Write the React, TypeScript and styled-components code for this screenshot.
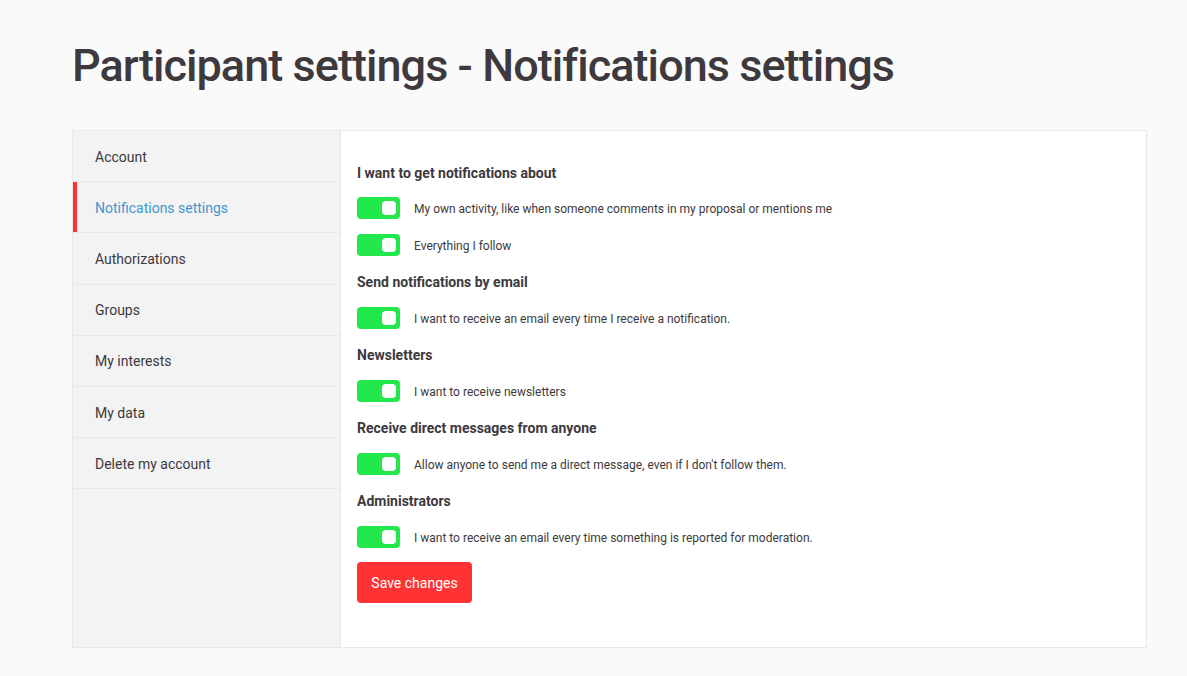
import React, { useState } from "react";
import styled, { createGlobalStyle } from "styled-components";

const GlobalStyle = createGlobalStyle`
  html, body {
    margin: 0;
    padding: 0;
    background: #fafafa;
  }
  body {
    font-family: Roboto, "Noto Sans", "Liberation Sans", sans-serif;
    color: #3d393c;
  }
  * { box-sizing: border-box; }
`;

const Page = styled.div`
  padding: 38px 40px 28px 72px;
  width: 1187px;
`;

const Title = styled.h1`
  margin: 0 0 36px;
  font-size: 45px;
  line-height: 56px;
  font-weight: 500;
  letter-spacing: -0.95px;
  color: #3d393c;
`;

const Card = styled.div`
  display: grid;
  grid-template-columns: 268px 1fr;
  width: 1075px;
  min-height: 518px;
  border: 1px solid #e8e8e8;
  background: #fff;
`;

const Sidebar = styled.nav`
  background: #f3f3f3;
  border-right: 1px solid #e8e8e8;
  display: flex;
  flex-direction: column;
`;

const NavItem = styled.a<{ $active?: boolean }>`
  position: relative;
  display: flex;
  align-items: center;
  height: 51.2px;
  padding: 1px 0 0 22px;
  border-bottom: 1px solid #e8e8e8;
  font-size: 14px;
  color: ${(p) => (p.$active ? "#3e97cf" : "#3d393c")};
  text-decoration: none;
  cursor: pointer;
  &::before {
    content: "";
    position: absolute;
    left: 0;
    top: 0;
    bottom: 0;
    width: 4px;
    background: ${(p) => (p.$active ? "#ff3333" : "transparent")};
  }
`;

const Content = styled.form`
  padding: 32px 16px 44px 16px;
  display: flex;
  flex-direction: column;
  align-items: flex-start;
`;

const SectionTitle = styled.h3<{ $first?: boolean }>`
  margin: ${(p) => (p.$first ? "0 0 14px" : "1px 0 15px")};
  font-size: 14px;
  line-height: 20px;
  font-weight: 700;
  color: #3d393c;
`;

const Row = styled.label`
  display: flex;
  align-items: center;
  gap: 14px;
  height: 22px;
  margin-bottom: 15px;
  padding-top: 1px;
  font-size: 12px;
  color: #3d393c;
  cursor: pointer;
`;

const Switch = styled.span<{ $on: boolean }>`
  position: relative;
  flex: none;
  align-self: flex-start;
  margin-top: -1px;
  width: 43px;
  height: 22px;
  border-radius: 4px;
  background: ${(p) => (p.$on ? "#22e84b" : "#cacaca")};
`;

const Knob = styled.span<{ $on: boolean }>`
  position: absolute;
  top: 4px;
  left: ${(p) => (p.$on ? "25px" : "4px")};
  width: 14px;
  height: 14px;
  border-radius: 4px;
  background: #fff;
`;

const Button = styled.button`
  margin-top: -1px;
  width: 115px;
  height: 41px;
  border: none;
  border-radius: 4px;
  background: #ff3333;
  color: #fff;
  font-family: inherit;
  font-size: 14px;
  cursor: pointer;
`;

const nav = [
  "Account",
  "Notifications settings",
  "Authorizations",
  "Groups",
  "My interests",
  "My data",
  "Delete my account",
];

const sections: { title: string; items: string[] }[] = [
  {
    title: "I want to get notifications about",
    items: [
      "My own activity, like when someone comments in my proposal or mentions me",
      "Everything I follow",
    ],
  },
  {
    title: "Send notifications by email",
    items: ["I want to receive an email every time I receive a notification."],
  },
  { title: "Newsletters", items: ["I want to receive newsletters"] },
  {
    title: "Receive direct messages from anyone",
    items: ["Allow anyone to send me a direct message, even if I don't follow them."],
  },
  {
    title: "Administrators",
    items: ["I want to receive an email every time something is reported for moderation."],
  },
];

function Toggle({ label }: { label: string }) {
  const [on, setOn] = useState(true);
  return (
    <Row onClick={() => setOn(!on)}>
      <Switch $on={on}>
        <Knob $on={on} />
      </Switch>
      <span>{label}</span>
    </Row>
  );
}

export default function App() {
  return (
    <>
      <GlobalStyle />
      <Page>
        <Title>Participant settings - Notifications settings</Title>
        <Card>
          <Sidebar>
            {nav.map((n) => (
              <NavItem key={n} $active={n === "Notifications settings"}>
                {n}
              </NavItem>
            ))}
          </Sidebar>
          <Content onSubmit={(e) => e.preventDefault()}>
            {sections.map((s, i) => (
              <React.Fragment key={s.title}>
                <SectionTitle $first={i === 0}>{s.title}</SectionTitle>
                {s.items.map((it) => (
                  <Toggle key={it} label={it} />
                ))}
              </React.Fragment>
            ))}
            <Button type="submit">Save changes</Button>
          </Content>
        </Card>
      </Page>
    </>
  );
}
